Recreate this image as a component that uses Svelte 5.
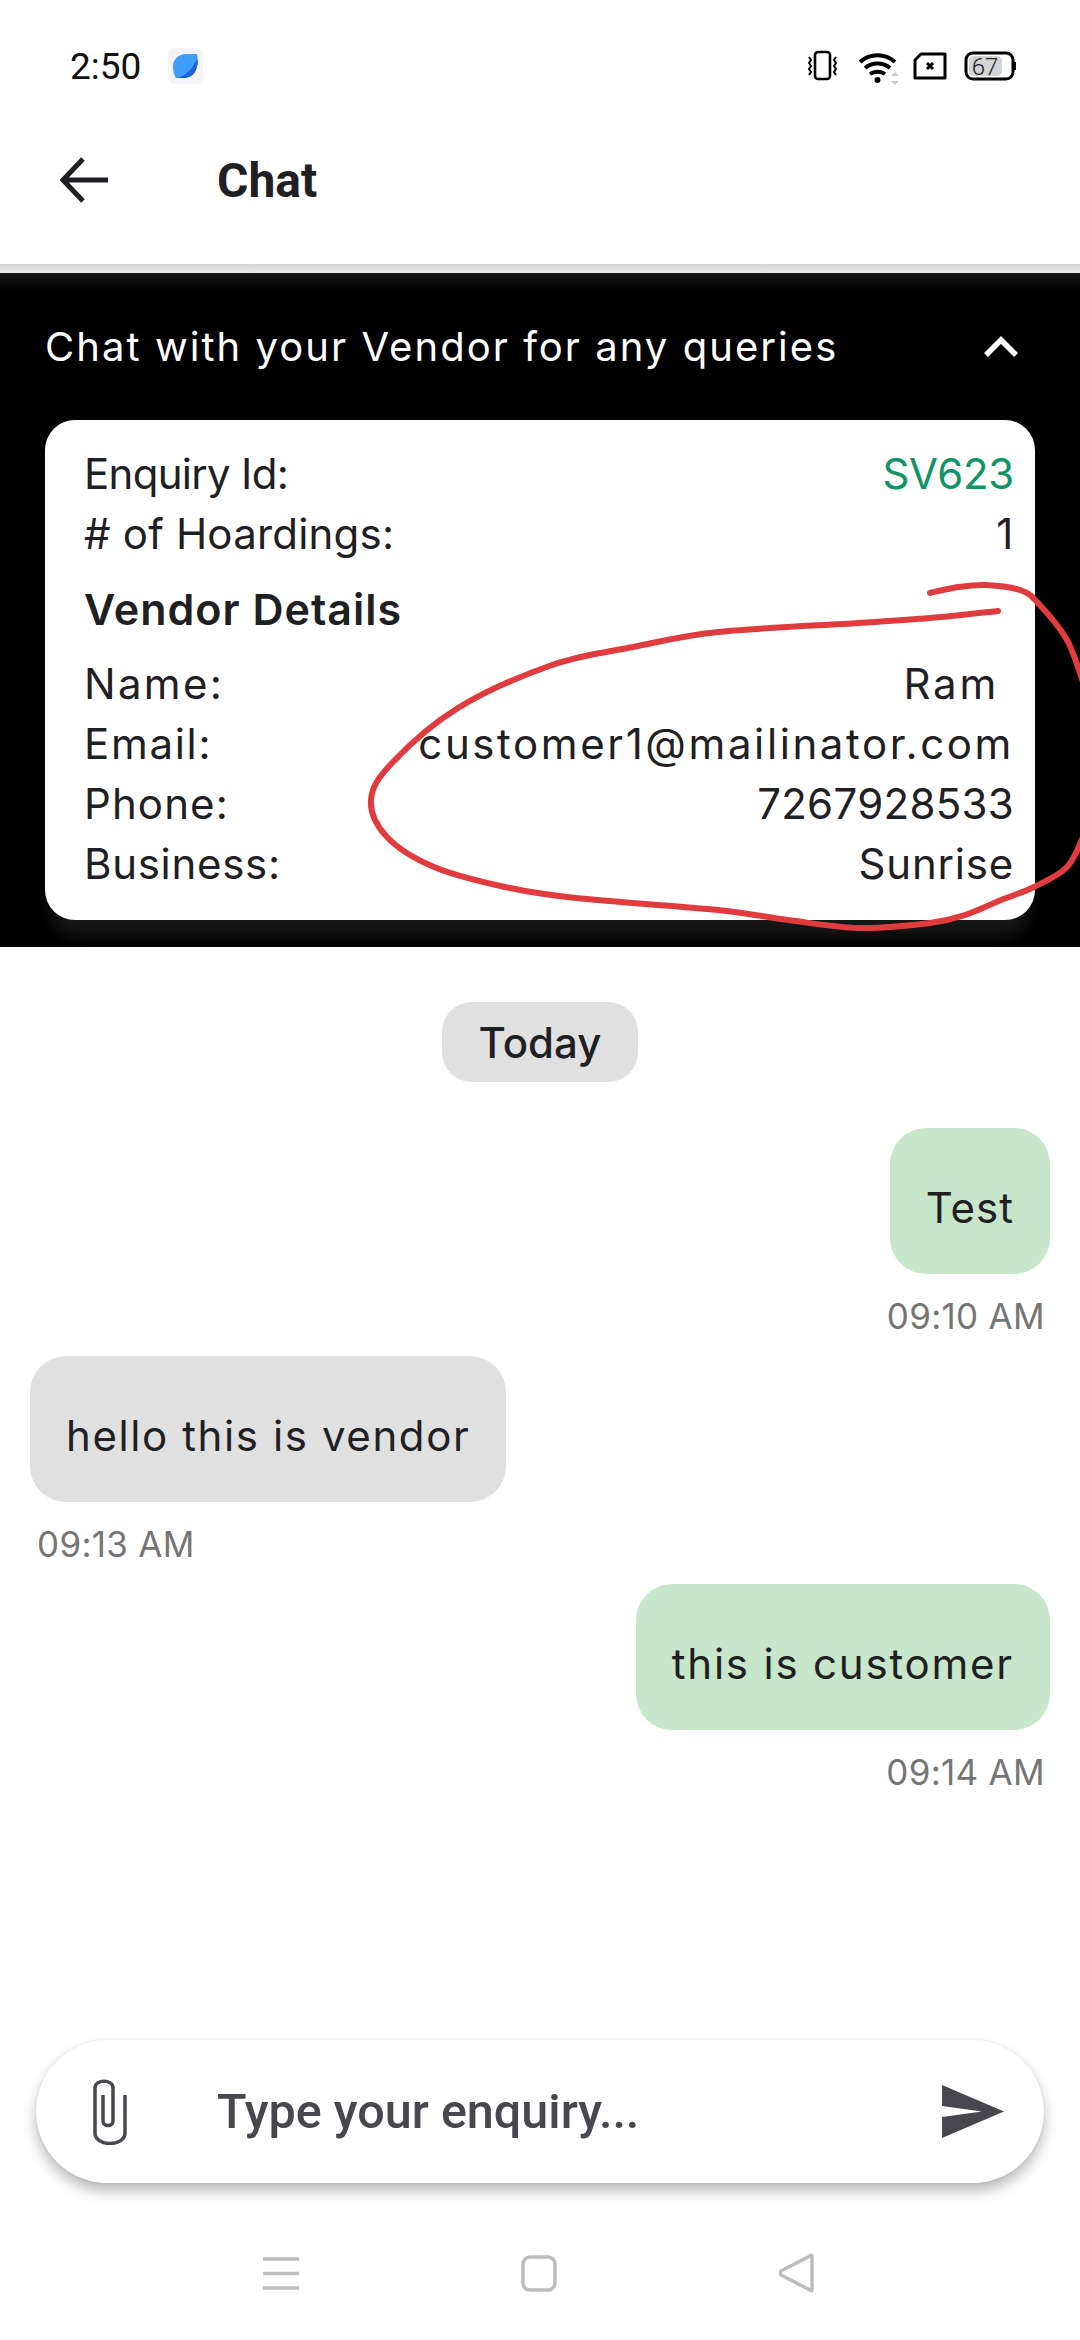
<script>
  const summary = [
    { label: 'Enquiry Id:', ls: -0.7, value: 'SV623', vs: -0.3, accent: true },
    { label: '# of Hoardings:', ls: 0.2, value: '1', vs: 0.6 }
  ];
  const vendor = [
    { label: 'Name:', ls: 2.3, value: 'Ram\u00a0', vs: 2.9 },
    { label: 'Email:', ls: 1.7, value: 'customer1@mailinator.com', vs: 2.6 },
    { label: 'Phone:', ls: 1.1, value: '7267928533', vs: 0.3 },
    { label: 'Business:', ls: 0.7, value: 'Sunrise', vs: 0.8 }
  ];
  const messages = [
    { text: 'Test', time: '09:10 AM', mine: true, first: true, ls: 1 },
    { text: 'hello this is vendor', time: '09:13 AM', ls: 1.6 },
    { text: 'this is customer', time: '09:14 AM', mine: true, ls: 1.8 }
  ];

  // Hand-drawn annotation, traced through sampled points.
  const strokes = [
    [[930,593],[958,587],[986,585],[1020,590],[1038,603],[1067,640],[1084,685]],
    [[1084,835],[1067,867],[1034,887],[1001,900],[965,915],[930,923],[859,928],[788,920],[718,910],[576,898],[505,887],[434,867],[387,837],[371,800],[392,763],[458,708],[552,665],[633,647],[718,632],[859,623],[930,618],[998,611]]
  ];
  function smooth(p) {
    let d = `M${p[0][0]} ${p[0][1]}`;
    for (let i = 0; i < p.length - 1; i++) {
      const a = p[Math.max(i - 1, 0)], b = p[i], c = p[i + 1], e = p[Math.min(i + 2, p.length - 1)];
      const c1x = b[0] + (c[0] - a[0]) / 6, c1y = b[1] + (c[1] - a[1]) / 6;
      const c2x = c[0] - (e[0] - b[0]) / 6, c2y = c[1] - (e[1] - b[1]) / 6;
      d += `C${c1x.toFixed(1)} ${c1y.toFixed(1)} ${c2x.toFixed(1)} ${c2y.toFixed(1)} ${c[0]} ${c[1]}`;
    }
    return d;
  }
  const ink = strokes.map(smooth).join('');
</script>

<div class="page">
  <div class="status">
    <span class="clock">2:50</span>
    <span class="appicon">
      <svg width="35" height="36" viewBox="0 0 35 36"><rect width="35" height="36" rx="6" fill="#f2f4f7"/><path d="M5 18C5 11 11 6 18 6h11c1 5 1 9 0 12-1 7-6 12-13 12H8C6 27 5 23 5 18z" fill="#3f9dfb"/><path d="M29 11c1 2 1 5 0 7-1 7-6 12-13 12H9c9-2 16-10 20-19z" fill="#1f5fdc"/></svg>
    </span>
    <span class="grow"></span>
    <svg class="sicons" width="210" height="40" viewBox="0 0 210 40">
      <rect x="9" y="4" width="15" height="27" rx="3" fill="none" stroke="#000" stroke-width="2.6"/>
      <path d="M3 9l2 3-2 3 2 3-2 3 2 3-2 3M30 9l-2 3 2 3-2 3 2 3-2 3 2 3" fill="none" stroke="#000" stroke-width="2"/>
      <path d="M54 14c10-9 25-9 35 0M59 20c7-6 18-6 25 0M64 26c4-3 11-3 15 0" fill="none" stroke="#000" stroke-width="4"/>
      <circle cx="71.500" cy="32" r="3" fill="#000"/>
      <path d="M85 28l4-4 4 4zM85 33l4 4 4-4z" fill="#ccc"/>
      <path d="M109 12l6-6h24v24h-30z" fill="none" stroke="#000" stroke-width="3" stroke-linejoin="round"/>
      <path d="M121 15l6 6M127 15l-6 6" stroke="#000" stroke-width="3"/>
      <rect x="160" y="5" width="47" height="26" rx="7" fill="none" stroke="#000" stroke-width="3"/>
      <rect x="163" y="8" width="33" height="20" rx="5" fill="#d4d4d4"/>
      <path d="M209 14v8" stroke="#000" stroke-width="2.500"/>
      <text x="179" y="27" text-anchor="middle" class="batt">67</text>
    </svg>
  </div>

  <header class="bar">
    <svg width="48" height="46" viewBox="0 0 48 46"><path d="M48 23H4M23 2L3 23l20 21" fill="none" stroke="#1f2024" stroke-width="5"/></svg>
    <h1>Chat</h1>
  </header>

  <section class="panel">
    <div class="panel-head">
      <span>Chat with your Vendor for any queries</span>
      <svg width="36" height="22" viewBox="0 0 36 22"><path d="M3 19L18 4l15 15" fill="none" stroke="#fff" stroke-width="5.500"/></svg>
    </div>
    <div class="card">
      {#each summary as row}
        <div class="row"><span style:letter-spacing="{row.ls}px">{row.label}</span><span class:accent={row.accent} style:letter-spacing="{row.vs}px">{row.value}</span></div>
      {/each}
      <h2>Vendor Details</h2>
      {#each vendor as row}
        <div class="row"><span style:letter-spacing="{row.ls}px">{row.label}</span><span style:letter-spacing="{row.vs}px">{row.value}</span></div>
      {/each}
    </div>
  </section>

  <main class="chat">
    <div class="today">Today</div>
    {#each messages as m}
      <div class="msg" class:mine={m.mine} class:first={m.first}>
        <div class="bubble" style:letter-spacing="{m.ls}px">{m.text}</div>
        <time>{m.time}</time>
      </div>
    {/each}
  </main>

  <div class="composer">
    <svg width="34" height="66" viewBox="0 0 34 66"><path d="M10 16V42C10 48 20 48 20 42V9C20 0 2 0 2 9V54C2 68 32 68 32 54V16" fill="none" stroke="#47474d" stroke-width="3.500"/></svg>
    <span class="placeholder">Type your enquiry...</span>
    <svg width="62" height="53" viewBox="0 0 62 53"><path d="M0 0l62 26.500L0 53V32l40-5.500L0 21z" fill="#47474d"/></svg>
  </div>

  <nav class="nav">
    <svg width="36" height="33" viewBox="0 0 36 33"><path d="M0 2h36M0 16.500h36M0 31h36" stroke="#bdbdbd" stroke-width="3.500"/></svg>
    <svg width="36" height="37" viewBox="0 0 36 37"><rect x="2" y="2" width="32" height="33" rx="7" fill="none" stroke="#bdbdbd" stroke-width="3.500"/></svg>
    <svg width="36" height="40" viewBox="0 0 36 40"><path d="M34 3v34c0 1-1 1-2 0L3 22q-1-2 0-4L32 3c1-1 2-1 2 0z" fill="none" stroke="#bdbdbd" stroke-width="3.500" stroke-linejoin="round"/></svg>
  </nav>

  <svg class="ink" width="1080" height="2340" viewBox="0 0 1080 2340">
    <path d={ink} fill="none" stroke="#e03c3e" stroke-width="6" stroke-linecap="round"/>
  </svg>
</div>

<style>
  :global(body) { margin: 0; background: #fff; }
  .page {
    position: relative; width: 1080px; height: 2340px; overflow: hidden;
    display: flex; flex-direction: column; background: #fff;
    font-family: Inter, "Noto Sans", sans-serif; color: #1f2024;
  }
  .status { height: 120px; display: flex; align-items: center; padding: 16px 64px 0 70px; box-sizing: border-box; }
  .clock { font: 400 37px Roboto, sans-serif; color: #111; margin-top: -3px; }
  .appicon { margin: -4px 0 0 27px; display: flex; }
  .grow { flex: 1; }
  .batt { font: 300 24px Roboto, sans-serif; fill: #222; }
  .bar {
    height: 153px; display: flex; align-items: center; padding: 0 0 33px 60px; box-sizing: border-box;
    background: linear-gradient(#fff 144px, #d2d2d2 144px, #ececec 153px);
  }
  h1 { margin: 0 0 0 109px; font: 700 48px Roboto, sans-serif; color: #1f2024; }
  .panel {
    background: linear-gradient(#141414, #000 20px); height: 674px; box-sizing: border-box;
    padding: 0 45px; overflow: hidden;
  }
  .panel-head {
    height: 147px; display: flex; justify-content: space-between; align-items: center;
    color: #fff; font-size: 40px; font-weight: 400; letter-spacing: 2.05px; padding-right: 16px; box-sizing: border-box;
  }
  .card {
    background: #fff; border-radius: 30px; height: 500px; box-sizing: border-box; padding: 24px 21px 0 39px;
    box-shadow: 0 22px 16px -6px rgba(255,255,255,.09);
  }
  .row { display: flex; justify-content: space-between; font-size: 42px; line-height: 60px; }
  .accent { color: #0e9467; }
  h2 { margin: 0; font-size: 43px; font-weight: 600; line-height: 90px; letter-spacing: 1px; }
  .chat { padding: 55px 30px 0; display: flex; flex-direction: column; }
  .today {
    align-self: center; width: 196px; height: 80px; border-radius: 30px; background: #e0e0e0;
    display: flex; align-items: center; justify-content: center; font-size: 42px; font-weight: 500;
  }
  .msg { display: flex; flex-direction: column; align-items: flex-start; margin-top: 12px; }
  .msg.first { margin-top: 46px; }
  .mine { align-items: flex-end; }
  .bubble {
    background: #e0e0e0; border-radius: 36px; height: 146px; padding: 12px 36px 0; box-sizing: border-box;
    display: flex; align-items: center; font-size: 42px;
  }
  .mine .bubble { background: #c8e6c9; }
  time { font-size: 35px; line-height: 56px; color: #757575; margin: 14px 7px 0; letter-spacing: .3px; }
  .mine time { margin-right: 5px; }
  .composer {
    margin: auto 36px 0; height: 143px; border-radius: 72px; background: #fff; display: flex; align-items: center;
    padding: 0 40px 0 57px; box-shadow: 0 8px 14px rgba(0,0,0,.28), 0 0 3px rgba(0,0,0,.08);
  }
  .placeholder { flex: 1; margin-left: 90px; font: 500 48.5px Roboto, sans-serif; color: #47474d; }
  .nav { height: 157px; display: flex; align-items: center; justify-content: space-between; padding: 23px 266px 0 263px; box-sizing: border-box; }
  .ink { position: absolute; inset: 0; pointer-events: none; }
</style>
